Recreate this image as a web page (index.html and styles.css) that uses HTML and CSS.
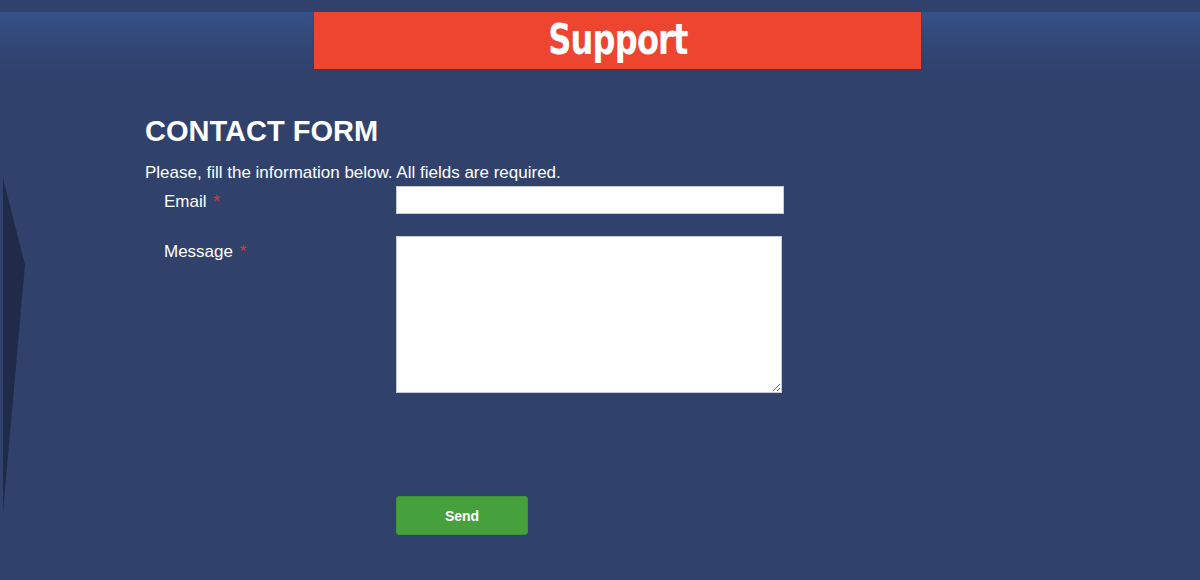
FILE: index.html
```html
<!DOCTYPE html>
<html lang="en">
<head>
    <meta charset="UTF-8">
    <title>Support</title>
    <link rel="stylesheet" href="styles.css">
</head>
<body>
    <div class="page">
        <div class="edge"></div>
        <div class="banner">
            <h1>Support</h1>
        </div>
        <div class="content">
            <h2>CONTACT FORM</h2>
            <p class="intro">Please, fill the information below. All fields are required.</p>
            <form class="form">
                <div class="row">
                    <label>Email <span class="req">*</span></label>
                    <input type="text" class="field">
                </div>
                <div class="row">
                    <label>Message <span class="req">*</span></label>
                    <textarea class="field area"></textarea>
                </div>
                <div class="row actions">
                    <button type="button" class="send">Send</button>
                </div>
            </form>
        </div>
    </div>
</body>
</html>
```

FILE: styles.css
```css
html, body {
    margin: 0;
    padding: 0;
    height: 100%;
}
body {
    font-family: "Liberation Sans", Arial, sans-serif;
    background-color: #30426c;
    color: #fff;
    overflow: hidden;
}
.page {
    position: relative;
    height: 580px;
    padding-top: 12px;
    box-sizing: border-box;
    background: linear-gradient(180deg, #30426c 0, #30426c 12px, #34528a 12px, #32497a 36px, #30426c 70px);
}
.edge {
    position: absolute;
    left: 3px;
    top: 178px;
    width: 22px;
    height: 334px;
    background-color: #1f2b49;
    clip-path: polygon(0 0, 100% 26%, 0 100%);
}
.banner {
    width: 607px;
    height: 57px;
    margin-left: 314px;
    background-color: #ee4530;
    box-shadow: 0 1px 2px rgba(120, 30, 20, 0.5);
    display: flex;
    justify-content: center;
    align-items: center;
}
.banner h1 {
    margin: -2px 0 0;
    font-family: "DejaVu Sans Condensed", "DejaVu Sans", sans-serif;
    font-stretch: condensed;
    font-weight: bold;
    font-size: 42px;
    letter-spacing: -1px;
    line-height: 1;
    transform: scaleX(0.85);
}
.content {
    padding-left: 145px;
    padding-top: 46px;
}
.content h2 {
    margin: 0;
    font-size: 29px;
    font-weight: bold;
    line-height: 32px;
}
.intro {
    margin: 16px 0 0;
    font-size: 17px;
    line-height: 19px;
}
.form {
    padding-top: 4px;
}
.row {
    display: flex;
    align-items: flex-start;
    margin-bottom: 22px;
}
.row label {
    width: 232px;
    padding-left: 19px;
    padding-top: 6px;
    font-size: 17px;
    line-height: 19px;
}
.req {
    color: #e2342c;
    margin-left: 2px;
}
.field {
    width: 388px;
    height: 28px;
    margin: 0;
    border: 1px solid #c8ccd4;
    background-color: #fff;
    box-sizing: border-box;
}
.area {
    width: 386px;
    height: 157px;
    resize: vertical;
    display: block;
}
.actions {
    padding-left: 251px;
    margin-top: 103px;
}
.send {
    width: 132px;
    height: 39px;
    background-color: #46a03c;
    border: 1px solid #3e9434;
    border-radius: 3px;
    color: #fff;
    font-family: "Liberation Sans", Arial, sans-serif;
    font-weight: bold;
    font-size: 14px;
    cursor: pointer;
}
```
